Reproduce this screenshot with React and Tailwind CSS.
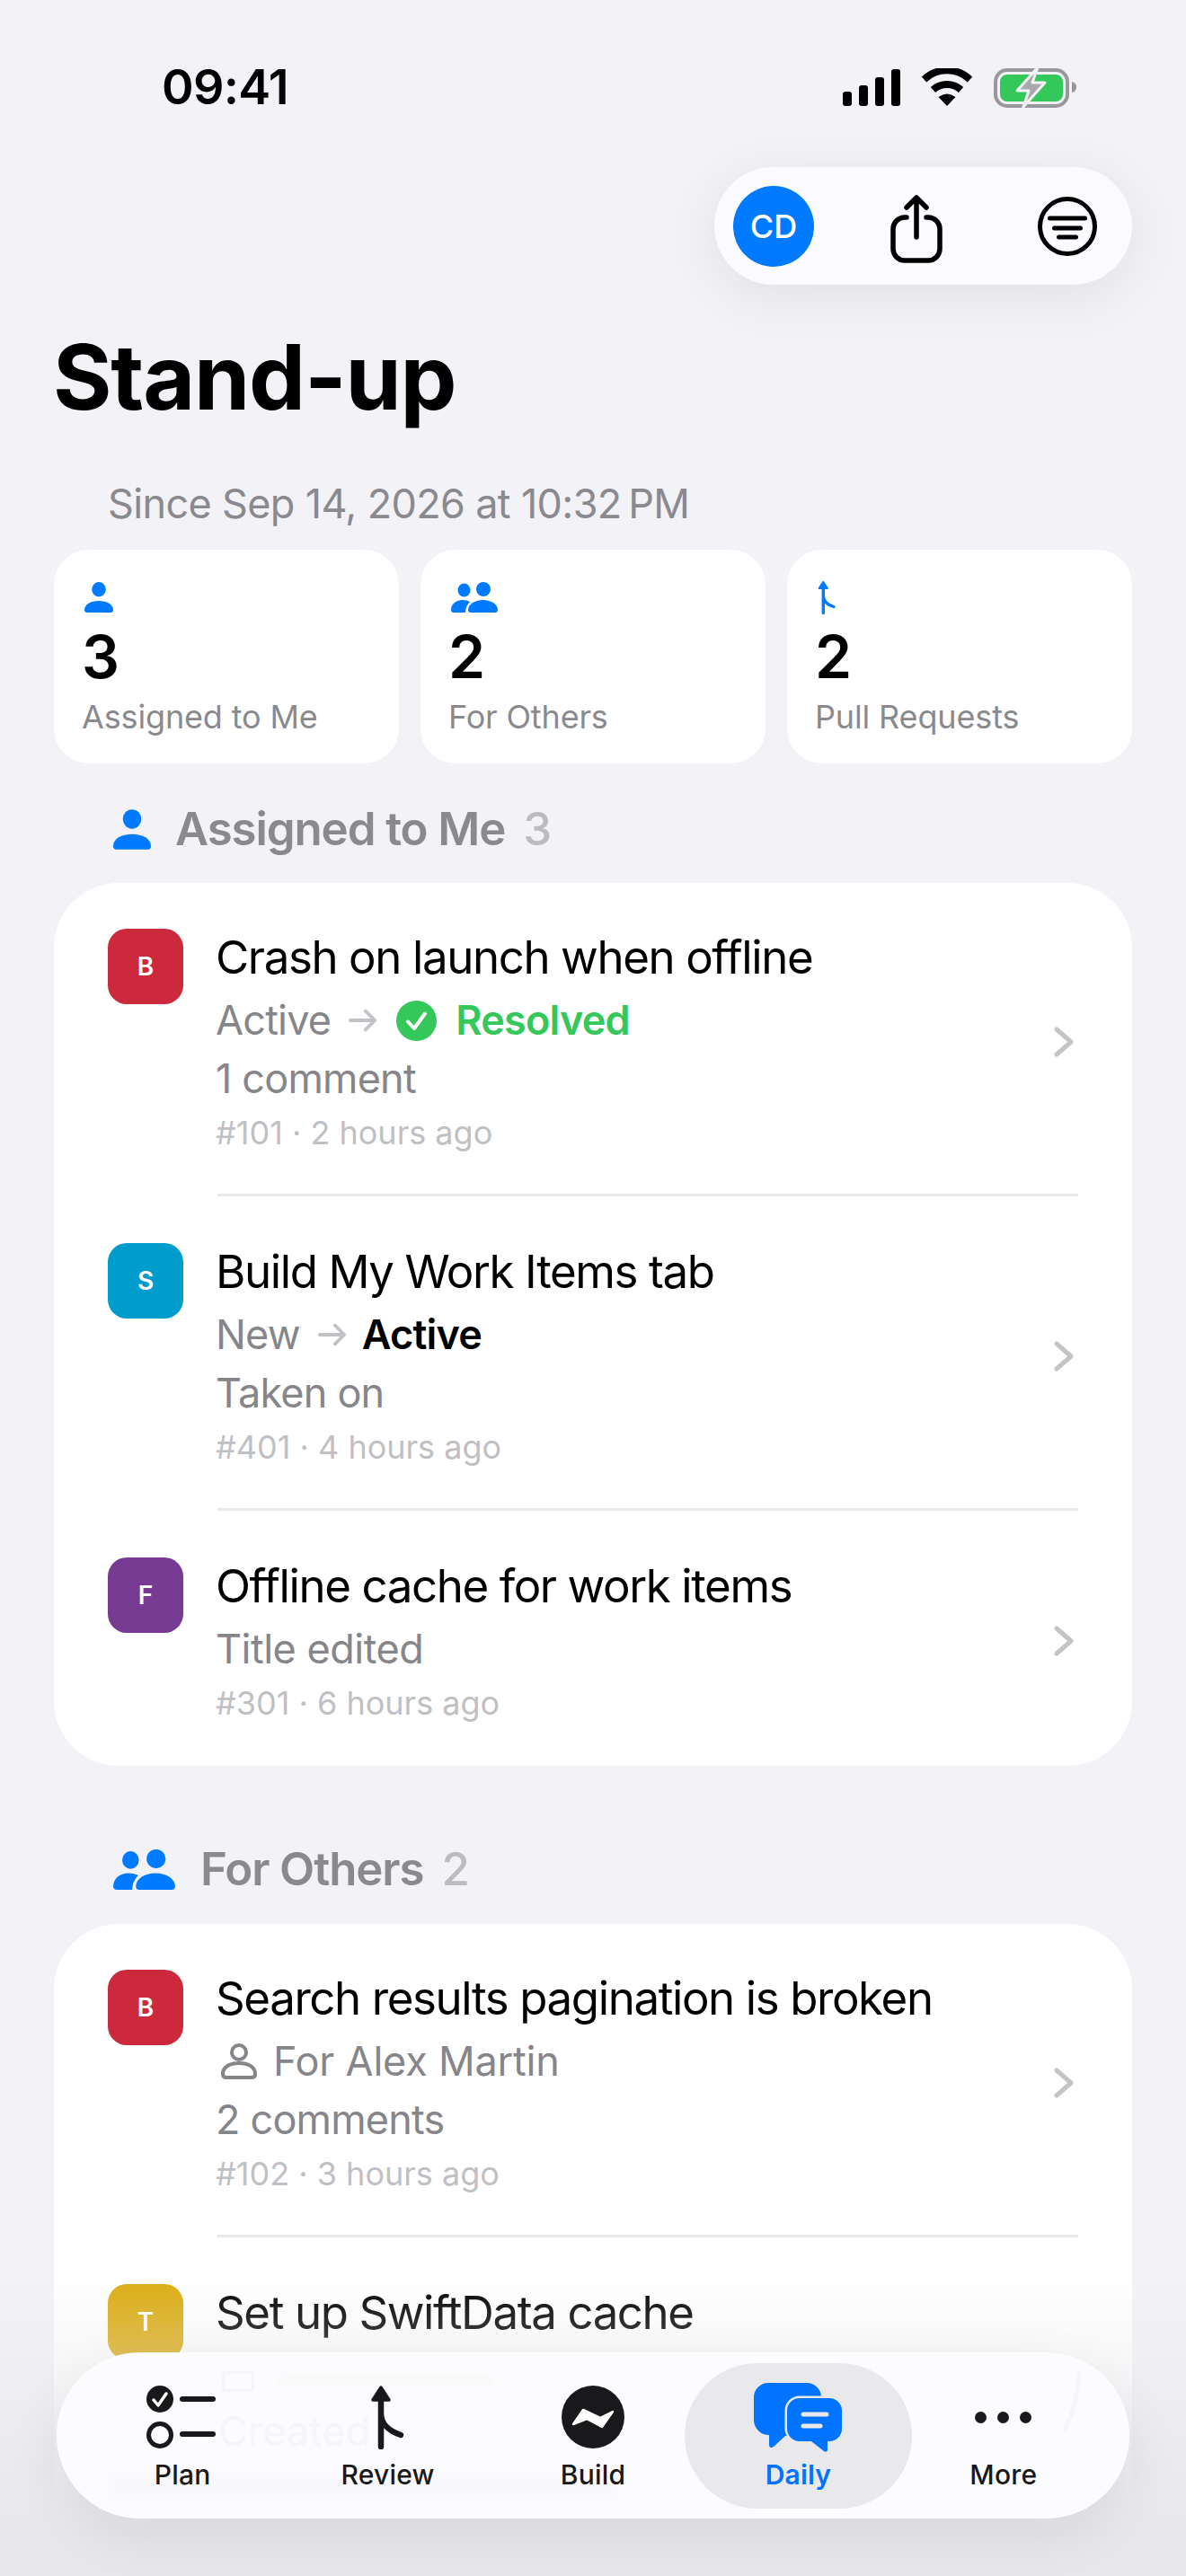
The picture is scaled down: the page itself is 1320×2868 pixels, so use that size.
import React from "react";

const Person = ({ className }) => (
  <svg viewBox="0 0 32 34" className={className} fill="#007aff">
    <ellipse cx="16" cy="8.2" rx="7.8" ry="8.2" />
    <path d="M0 31C0 25 7 21 16 21s16 4 16 10q0 3-3 3H3q-3 0-3-3z" />
  </svg>
);

const People = ({ className }) => (
  <svg viewBox="0 0 52 34" className={className} fill="#007aff">
    <ellipse cx="14.5" cy="9" rx="7" ry="7.4" />
    <ellipse cx="36" cy="8" rx="8" ry="8" />
    <path d="M0 31c0-6 5-11 13-11 3 0 6 .8 8 2-3 3-5 7-5 12H3q-3 0-3-3z" />
    <path d="M19 31c0-6 7-11 16.500-11S52 25 52 31q0 3-3 3H22q-3 0-3-3z" />
  </svg>
);

const PullArrow = ({ className, color }) => (
  <svg viewBox="0 0 40 72" className={className} fill="none" stroke={color} strokeLinecap="round" strokeLinejoin="round">
    <path d="M12 3 21 17H3z" fill={color} strokeWidth="3.500" />
    <path d="M12 12v57M12 32c0 12 10 20 22 24" strokeWidth="6.500" />
  </svg>
);

const Chevron = () => (
  <svg viewBox="0 0 24 34" className="w-[24px] h-[34px] shrink-0 -mt-[6px]" fill="none" stroke="#c4c4c7" strokeWidth="5" strokeLinecap="round" strokeLinejoin="round">
    <path d="M4 3 20 17 4 31" />
  </svg>
);

const SmallArrow = () => (
  <svg viewBox="0 0 34 26" className="w-[32px] h-[26px] ml-[20px] mr-[17px]" fill="none" stroke="#c2c2c6" strokeWidth="4" strokeLinecap="round" strokeLinejoin="round">
    <path d="M2 13h29M20 2l11 11-11 11" />
  </svg>
);

const ResolvedCheck = () => (
  <svg viewBox="0 0 45 45" className="w-[45px] h-[45px] ml-[4px] mr-[21px]">
    <circle cx="22.500" cy="22.500" r="22.500" fill="#34c759" />
    <path d="M13 23.500 20 31 32 14.500" fill="none" stroke="#fff" strokeWidth="4" strokeLinecap="round" strokeLinejoin="round" />
  </svg>
);

const PersonOutline = () => (
  <svg viewBox="0 0 40 40" className="w-[40px] h-[40px] ml-[6px] mr-[18px]" fill="none" stroke="#86868a" strokeWidth="4">
    <circle cx="20" cy="10" r="8" />
    <path d="M2 34c0-8 8-12 18-12s18 4 18 12q0 4-4 4H6q-4 0-4-4z" />
  </svg>
);

const Tile = ({ letter, color }) => (
  <div className={`w-[84px] h-[84px] rounded-[21px] shrink-0 flex items-center justify-center text-white text-[28px] font-semibold ${color}`}>
    {letter}
  </div>
);

const Row = ({ letter, color, title, status, comment, meta, first, last, tall }) => (
  <>
    <div className={`flex items-center pl-[60px] pr-[64px] ${first ? "pt-[51px]" : "pt-[52px]"} ${last ? "pb-[40px]" : "pb-[38px]"}`}>
      <div className={`flex-1 flex items-start gap-[36px] ${tall ? "min-h-[300px]" : ""}`}>
        <Tile letter={letter} color={color} />
        <div className="flex-1 pt-[2px]">
          <div className="text-[51px] leading-[60px] text-black tracking-[-1.4px] mb-[10px]">{title}</div>
          <div className="h-[60px] flex items-center text-[45px] text-[#86868a] tracking-[-0.8px]">{status}</div>
          {comment && <div className="text-[45px] leading-[60px] text-[#86868a] tracking-[-0.8px] mt-[5px]">{comment}</div>}
          {meta && <div className="text-[36px] leading-[60px] text-[#c0c0c4]">{meta}</div>}
        </div>
      </div>
      <Chevron />
    </div>
    {!last && <div className="h-[3px] ml-[182px] mr-[60px] bg-[#e9e9eb]" />}
  </>
);

const SectionHeader = ({ icon, label, count, gap }) => (
  <div className="h-[60px] flex items-center pl-[126px] text-[51px] tracking-[-1.1px]">
    {icon}
    <span className={`font-semibold text-[#8a8a8e] ${gap}`}>{label}</span>
    <span className="font-medium text-[#bcbcc0] ml-[20px]">{count}</span>
  </div>
);

const StatCard = ({ icon, value, label }) => (
  <div className="flex-1 bg-white rounded-[39px] pl-[31px] pt-[34px] pb-[29px]">
    <div className="h-[37px] flex items-center ml-[3px]">{icon}</div>
    <div className="text-[66px] leading-[80px] font-semibold text-black mt-[8px]">{value}</div>
    <div className="text-[36px] leading-[46px] text-[#8a8a8e] mt-[4px] tracking-[-0.15px]">{label}</div>
  </div>
);

const StatusIcons = () => (
  <div className="flex items-start gap-[16px]">
    <div className="flex items-end gap-[8px] h-[42px]">
      <div className="w-[10px] h-[16px] rounded-[3px] bg-black" />
      <div className="w-[10px] h-[23px] rounded-[3px] bg-black" />
      <div className="w-[10px] h-[32px] rounded-[3px] bg-black" />
      <div className="w-[10px] h-[41px] rounded-[3px] bg-black" />
    </div>
    <svg viewBox="0 0 58 42" className="w-[58px] h-[42px] ml-[7px]">
      <g fill="none" stroke="#000" strokeWidth="8">
        <path d="M3.500 12.500a37 37 0 0 1 51 0" />
        <path d="M13.500 24a23 23 0 0 1 31 0" />
      </g>
      <path d="M29 42 19.500 32Q29 25 38.500 32z" fill="#000" />
    </svg>
    <svg viewBox="0 0 92 46" className="w-[92px] h-[46px] -mt-[2px] ml-[7px]">
      <rect x="2" y="4" width="80" height="40" rx="13" fill="none" stroke="#98989c" strokeWidth="4" />
      <rect x="7" y="9" width="70" height="30" rx="8" fill="#34c759" />
      <path d="M87 17q5 1 5 6t-5 6z" fill="#98989c" />
      <path d="M49 1 26 27h13l-6 18 24-27H43z" fill="#a9a9ad" stroke="#f2f2f7" strokeWidth="3" strokeLinejoin="round" />
    </svg>
  </div>
);

const ShareIcon = () => (
  <svg viewBox="0 0 60 76" className="w-[60px] h-[76px]" fill="none" stroke="#000" strokeWidth="5.500" strokeLinecap="round" strokeLinejoin="round">
    <path d="M19 25h-2A13 13 0 0 0 4 38v22a13 13 0 0 0 13 13h26a13 13 0 0 0 13-13V38a13 13 0 0 0-13-13h-2" />
    <path d="M30 47V3M19 14 30 3l11 11" />
  </svg>
);

const FilterIcon = () => (
  <svg viewBox="0 0 66 66" className="w-[66px] h-[66px]" fill="none" stroke="#000" strokeWidth="5" strokeLinecap="round">
    <circle cx="33" cy="33" r="30.500" />
    <path d="M13.500 24h39M18.500 35h29M23.500 45h19" />
  </svg>
);

const tabs = [
  {
    label: "Plan",
    icon: (
      <svg viewBox="0 0 77 70" className="w-[77px] h-[70px] -ml-[3px]">
        <circle cx="15" cy="15" r="15" fill="#19191b" />
        <path d="M8 16l5 6 9-13" fill="none" stroke="#fff" strokeWidth="3.500" strokeLinecap="round" strokeLinejoin="round" />
        <circle cx="15" cy="55" r="12.500" fill="none" stroke="#19191b" strokeWidth="5" />
        <path d="M40 15h34M40 54h34" stroke="#19191b" strokeWidth="6" strokeLinecap="round" />
      </svg>
    ),
  },
  { label: "Review", icon: <PullArrow className="w-[40px] h-[72px]" color="#19191b" /> },
  {
    label: "Build",
    icon: (
      <svg viewBox="0 0 70 70" className="w-[70px] h-[70px]">
        <circle cx="35" cy="35" r="35" fill="#19191b" />
        <path d="M13 43 24 27l19 9 14-7-12 17-17-9z" fill="#fff" stroke="#fff" strokeWidth="2.500" strokeLinejoin="round" />
      </svg>
    ),
  },
  {
    label: "Daily",
    active: true,
    icon: (
      <svg viewBox="0 0 98 77" className="w-[98px] h-[77px] relative">
        <path d="M16 0h43a16 16 0 0 1 16 16v27a16 16 0 0 1-16 16H35L22 71q-5 3-5-3V58A17 17 0 0 1 0 42V16A16 16 0 0 1 16 0z" fill="#0073ff" />
        <path d="M51 17h33a14 14 0 0 1 14 14v20a14 14 0 0 1-14 14h-2v9q0 4-4 2L64 65H51a14 14 0 0 1-14-14V31a14 14 0 0 1 14-14z" fill="#0073ff" stroke="#e9e9eb" strokeWidth="5" paintOrder="stroke" />
        <path d="M55 35h26M55 48h19" stroke="#e9e9eb" strokeWidth="5" strokeLinecap="round" />
      </svg>
    ),
  },
  {
    label: "More",
    icon: (
      <div className="flex gap-[12px]">
        <div className="w-[13px] h-[13px] rounded-full bg-[#19191b]" />
        <div className="w-[13px] h-[13px] rounded-full bg-[#19191b]" />
        <div className="w-[13px] h-[13px] rounded-full bg-[#19191b]" />
      </div>
    ),
  },
];

const TabBar = () => (
  <div className="absolute left-[63px] top-[2619px] w-[1194px] h-[185px] rounded-full bg-[#fcfcfe] shadow-[0_20px_60px_rgba(0,0,0,0.08)] px-[26px] grid grid-cols-5">
    {/* faint refraction of the row scrolled underneath */}
    <div className="absolute inset-0 rounded-full overflow-hidden">
      <div className="absolute left-[184px] top-[21px] w-[36px] h-[23px] rounded-[4px] border-[3px] border-[#f6f6f9]" />
      <div className="absolute left-[249px] top-[26px] w-[235px] h-[10px] bg-[#f8f8fa] blur-[3px]" />
      <div className="absolute left-[180px] top-[58px] text-[45px] leading-[60px] text-[#f6f6f9]">Created</div>
      <div className="absolute left-[60px] top-[134px] w-[560px] h-[30px] bg-[#f8f8fb] blur-[6px]" />
      <svg viewBox="0 0 24 70" className="absolute left-[1118px] top-[20px] w-[24px] h-[70px]" fill="none" stroke="#f6f6f8" strokeWidth="5" strokeLinecap="round">
        <path d="M20 3Q18 40 4 66" />
      </svg>
    </div>
    {tabs.map((tab) => (
      <div key={tab.label} className="relative flex flex-col items-center">
        {tab.active && <div className="absolute left-[-12px] top-[12px] w-[253px] h-[162px] rounded-full bg-[#e9e9eb]" />}
        <div className="relative h-[80px] mt-[32px] flex items-center justify-center">{tab.icon}</div>
        <div className={`relative mt-[6px] text-[30px] leading-[36px] tracking-[0.2px] ${tab.active ? "text-[#0073ff] font-semibold" : "text-[#19191b] font-medium"}`}>
          {tab.label}
        </div>
      </div>
    ))}
  </div>
);

export default function App() {
  return (
    <div className="relative w-[1320px] h-[2868px] overflow-hidden bg-[#f2f2f7] [font-family:Inter,sans-serif]">
      {/* status bar */}
      <div className="h-[186px] flex justify-between pl-[180px] pr-[122px] pt-[76px]">
        <div className="text-[54px] leading-[42px] font-semibold text-black tracking-[-0.7px]">09:41</div>
        <StatusIcons />
      </div>

      {/* toolbar */}
      <div className="flex justify-end pr-[60px]">
        <div className="w-[465px] h-[131px] rounded-full bg-[#fbfbff] shadow-[0_12px_60px_rgba(0,0,0,0.08)] flex items-center pl-[21px]">
          <div className="w-[90px] h-[90px] rounded-full bg-[#007aff] flex items-center justify-center text-white text-[36px] font-medium">CD</div>
          <div className="ml-[84px] mt-[6px]"><ShareIcon /></div>
          <div className="ml-[105px]"><FilterIcon /></div>
        </div>
      </div>

      <h1 className="mt-[43px] ml-[59px] text-[100px] leading-[120px] font-bold text-black tracking-[-1.2px]">Stand-up</h1>
      <div className="mt-[51px] ml-[120px] text-[45px] leading-[60px] text-[#8a8a8e] tracking-[-0.65px]">Since Sep 14, 2026 at 10:32{"\u202f"}PM</div>

      {/* summary cards */}
      <div className="mt-[21px] px-[60px] flex items-center gap-[24px]">
        <StatCard icon={<Person className="w-[32px] h-[34px]" />} value="3" label="Assigned to Me" />
        <StatCard icon={<People className="w-[52px] h-[34px]" />} value="2" label="For Others" />
        <StatCard icon={<PullArrow className="w-[21px] h-[38px]" color="#007aff" />} value="2" label="Pull Requests" />
      </div>

      <div className="mt-[43px]">
        <SectionHeader icon={<Person className="w-[42px] h-[45px]" />} label="Assigned to Me" count="3" gap="ml-[27px]" />
      </div>
      <div className="mt-[30px] mx-[60px] bg-white rounded-[72px]">
        <Row
          first
          letter="B"
          color="bg-[#cc293d]"
          title="Crash on launch when offline"
          status={<><span>Active</span><SmallArrow /><ResolvedCheck /><span className="text-[#34c759] font-semibold">Resolved</span></>}
          comment="1 comment"
          meta="#101 · 2 hours ago"
        />
        <Row
          letter="S"
          color="bg-[#009ccc]"
          title="Build My Work Items tab"
          status={<><span>New</span><SmallArrow /><span className="text-black font-semibold">Active</span></>}
          comment="Taken on"
          meta="#401 · 4 hours ago"
        />
        <Row
          last
          letter="F"
          color="bg-[#773b93]"
          title="Offline cache for work items"
          status={<span className="tracking-[-0.5px]">Title edited</span>}
          meta="#301 · 6 hours ago"
        />
      </div>

      <div className="mt-[85px]">
        <SectionHeader icon={<People className="w-[69px] h-[45px]" />} label="For Others" count="2" gap="ml-[28px]" />
      </div>
      <div className="mt-[31px] mx-[60px] bg-white rounded-[72px] min-h-[800px]">
        <Row
          first
          letter="B"
          color="bg-[#cc293d]"
          title="Search results pagination is broken"
          status={<><PersonOutline /><span className="tracking-[-0.2px]">For Alex Martin</span></>}
          comment="2 comments"
          meta="#102 · 3 hours ago"
        />
        <Row last tall letter="T" color="bg-[#dbab0f]" title="Set up SwiftData cache" status="Created" />
      </div>

      {/* fade behind the tab bar */}
      <div className="absolute left-0 right-0 top-[2530px] h-[338px] bg-linear-to-b from-transparent to-[#e8e8ec] to-[86%]" />
      <TabBar />
    </div>
  );
}
